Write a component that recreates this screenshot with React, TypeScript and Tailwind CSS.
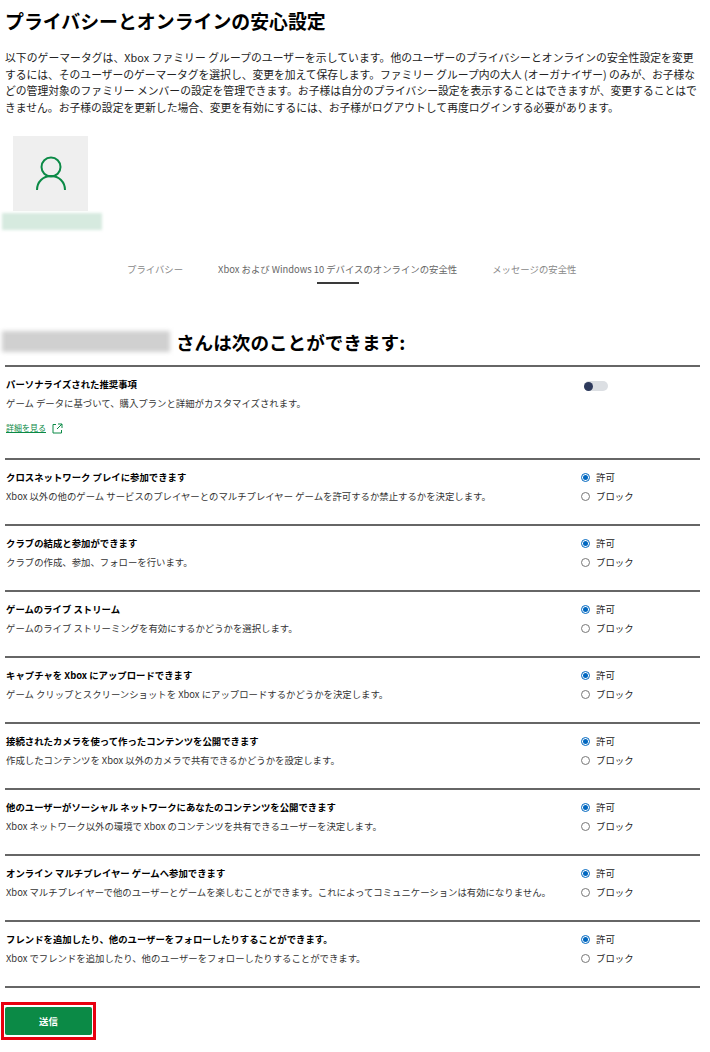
const font = { fontFamily: '"Noto Sans CJK JP", "Liberation Sans", sans-serif' };

interface SettingRow {
  title: string;
  description: string;
}

const rows: SettingRow[] = [
  {
    title: "クロスネットワーク プレイに参加できます",
    description: "Xbox 以外の他のゲーム サービスのプレイヤーとのマルチプレイヤー ゲームを許可するか禁止するかを決定します。",
  },
  { title: "クラブの結成と参加ができます", description: "クラブの作成、参加、フォローを行います。" },
  { title: "ゲームのライブ ストリーム", description: "ゲームのライブ ストリーミングを有効にするかどうかを選択します。" },
  {
    title: "キャプチャを Xbox にアップロードできます",
    description: "ゲーム クリップとスクリーンショットを Xbox にアップロードするかどうかを決定します。",
  },
  {
    title: "接続されたカメラを使って作ったコンテンツを公開できます",
    description: "作成したコンテンツを Xbox 以外のカメラで共有できるかどうかを設定します。",
  },
  {
    title: "他のユーザーがソーシャル ネットワークにあなたのコンテンツを公開できます",
    description: "Xbox ネットワーク以外の環境で Xbox のコンテンツを共有できるユーザーを決定します。",
  },
  {
    title: "オンライン マルチプレイヤー ゲームへ参加できます",
    description: "Xbox マルチプレイヤーで他のユーザーとゲームを楽しむことができます。これによってコミュニケーションは有効になりません。",
  },
  {
    title: "フレンドを追加したり、他のユーザーをフォローしたりすることができます。",
    description: "Xbox でフレンドを追加したり、他のユーザーをフォローしたりすることができます。",
  },
];

const Radio = ({ checked, label }: { checked?: boolean; label: string }) => (
  <div className="flex h-[19px] items-center gap-[6px]">
    <span
      className={`flex h-[9px] w-[9px] items-center justify-center rounded-full border ${
        checked ? "border-[#0067c0]" : "border-[#777777]"
      }`}
    >
      {checked && <span className="h-[5px] w-[5px] rounded-full bg-[#0067c0]" />}
    </span>
    <span className="text-[9.4px] text-[#222222]">{label}</span>
  </div>
);

const Row = ({ title, description }: SettingRow) => (
  <div className="flex h-[66px] border-t-2 border-[#666666] pt-[8px]">
    <div className="w-[574px] pl-px">
      <div className="h-[18px] text-[9.4px] leading-[18px] font-bold text-black">{title}</div>
      <div className="mt-px text-[9.4px] leading-[18px] text-[#333333]">{description}</div>
    </div>
    <div className="pl-[2px]">
      <Radio checked label="許可" />
      <Radio label="ブロック" />
    </div>
  </div>
);

export default function App() {
  return (
    <div className="h-[1052px] w-[710px] overflow-hidden bg-white" style={font}>
      <div className="pl-[5px] pr-[10px]">
        <h1 className="pt-[7px] text-[18.9px] leading-[28px] font-bold text-black">プライバシーとオンラインの安心設定</h1>
        <div className="mt-[14px] whitespace-nowrap text-[10.8px] leading-[16.5px] text-[#222222]">
          <p className="tracking-[0.05px]">以下のゲーマータグは、Xbox ファミリー グループのユーザーを示しています。他のユーザーのプライバシーとオンラインの安全性設定を変更</p>
          <p className="tracking-[-0.03px]">するには、そのユーザーのゲーマータグを選択し、変更を加えて保存します。ファミリー グループ内の大人 (オーガナイザー) のみが、お子様な</p>
          <p>どの管理対象のファミリー メンバーの設定を管理できます。お子様は自分のプライバシー設定を表示することはできますが、変更することはで</p>
          <p>きません。お子様の設定を更新した場合、変更を有効にするには、お子様がログアウトして再度ログインする必要があります。</p>
        </div>

        <div className="mt-[21px] ml-[8px] flex h-[75px] w-[75px] items-center justify-center bg-[#efefef]">
          <svg width="32" height="36" viewBox="0 0 32 36" fill="none" stroke="#0b8a46" strokeWidth="2">
            <circle cx="16" cy="11" r="9.5" />
            <path d="M2 34c0-8 6-14 14-14s14 6 14 14" />
          </svg>
        </div>
        <div className="mt-[2px] -ml-[3px] h-[17px] w-[100px] bg-[#d6eadf] blur-[1.5px]" />

        <div className="mt-[31px] ml-[122px] flex gap-[35px] text-[9.4px] leading-[16px] text-[#888888]">
          <span>プライバシー</span>
          <span className="relative text-[#666666]">
            Xbox および Windows 10 デバイスのオンラインの安全性
            <span className="absolute top-[21px] left-[99px] h-[2px] w-[42px] bg-[#3a3a3a]" />
          </span>
          <span>メッセージの安全性</span>
        </div>

        <div className="mt-[53px] -ml-[3px] flex h-[23px] items-center gap-[6px]">
          <div className="h-[21px] w-[168px] bg-[#d0d0d0] blur-[2px]" />
          <h2 className="text-[18.6px] leading-[23px] font-bold text-black">さんは次のことができます:</h2>
        </div>

        <div className="mt-[12px]">
          <div className="flex h-[93px] border-t-2 border-[#666666] pt-[8px]">
            <div className="w-[574px] pl-px">
              <div className="h-[18px] text-[9.4px] leading-[18px] font-bold text-black">パーソナライズされた推奨事項</div>
              <div className="mt-px text-[9.4px] leading-[18px] text-[#333333]">ゲーム データに基づいて、購入プランと詳細がカスタマイズされます。</div>
              <div className="mt-[9px] flex items-center gap-[6px] text-[#0b8a46]">
                <span className="text-[8px] leading-[14px] underline">詳細を見る</span>
                <svg width="11" height="11" viewBox="0 0 11 11" fill="none" stroke="currentColor" strokeWidth="1">
                  <path d="M4 1.5H1v8.5h8.5V7M6 1h4v4M10 1 5 6" />
                </svg>
              </div>
            </div>
            <div className="pl-[5px] pt-[6px]">
              <div className="flex h-[10px] w-[24px] items-center rounded-full bg-[#dcdfe3]">
                <span className="h-[9px] w-[9px] rounded-full bg-[#2e3a5c]" />
              </div>
            </div>
          </div>
          {rows.map((row) => (
            <Row key={row.title} title={row.title} description={row.description} />
          ))}
          <div className="border-t-2 border-[#666666]" />
        </div>

        <div className="mt-[14px] -ml-[4px] inline-block border-[3px] border-[#e8000f] px-px py-[2px]">
          <button className="block h-[28px] w-[87px] rounded-[2px] bg-[#0b8a46] text-[9.4px] font-bold text-white">送信</button>
        </div>
      </div>
    </div>
  );
}
